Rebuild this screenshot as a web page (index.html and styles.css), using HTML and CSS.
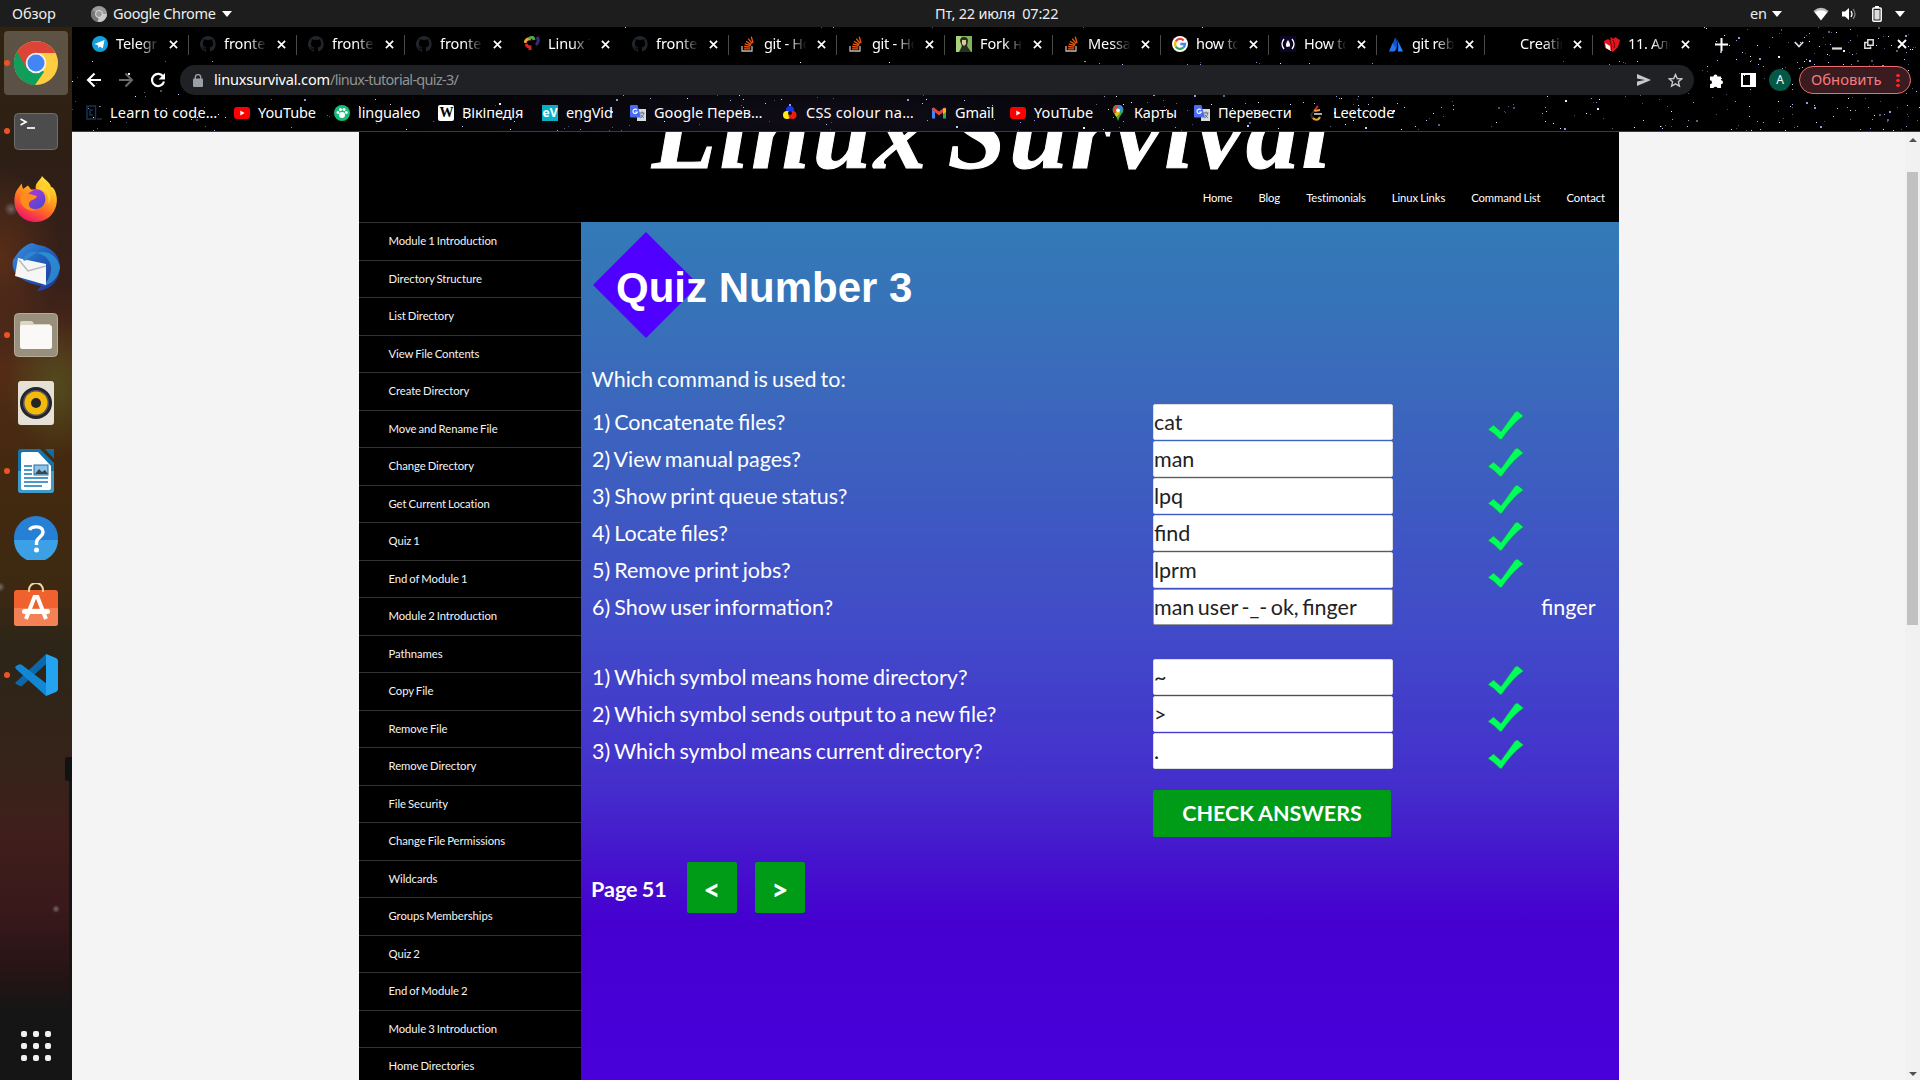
FILE: index.html
```html
<!DOCTYPE html>
<html lang="ru">
<head>
<meta charset="utf-8">
<title>Linux Survival</title>
<link rel="stylesheet" href="styles.css">
</head>
<body>
<svg class="defs" aria-hidden="true">
  <symbol id="x" viewBox="0 0 10 10"><path d="M1 1l8 8M9 1l-8 8" stroke="#fff" stroke-width="1.9" fill="none"/></symbol>
  <symbol id="github" viewBox="0 0 16 16"><path fill="#20262c" d="M8 0a8 8 0 0 0-2.5 15.6c.4.1.5-.2.5-.4v-1.500c-2.200.5-2.700-1-2.700-1-.4-.9-.9-1.200-.9-1.200-.7-.5.1-.5.1-.5.8.1 1.200.8 1.200.8.7 1.300 1.900.9 2.300.7.1-.5.300-.9.5-1.100-1.800-.2-3.600-.9-3.600-4 0-.9.300-1.600.8-2.100-.1-.2-.4-1 .1-2.100 0 0 .7-.2 2.200.8a7.500 7.500 0 0 1 4 0c1.500-1 2.200-.8 2.200-.8.4 1.100.2 1.900.1 2.100.5.6.8 1.300.8 2.100 0 3.100-1.900 3.700-3.700 3.900.3.300.6.8.6 1.500v2.200c0 .2.100.5.600.4A8 8 0 0 0 8 0z"/></symbol>
  <symbol id="so" viewBox="0 0 16 16"><path d="M2 10v5h10v-5" fill="none" stroke="#bcbbbb" stroke-width="1.300"/><path d="M4 12.800h6.200M4.100 10.500l6.200.6M4.700 7.900l6 1.700M6 5.300l5.300 3.300M8.200 2.700l4.100 4.800M11.200.8l1.900 5.900" stroke="#f2590d" stroke-width="1.300"/></symbol>
  <symbol id="yt" viewBox="0 0 16 16"><rect y="2" width="16" height="12" rx="3" fill="#f00"/><path d="M6.300 5.500v5l4.300-2.500z" fill="#fff"/></symbol>
  <symbol id="gtr" viewBox="0 0 16 16"><rect x="7" y="4" width="9" height="12" fill="#d8dce0"/><path d="M9.500 8h5M12 6.500V8M10.500 13c2-1 3-3 3.200-5M10.800 9.500l3 3.500" stroke="#5f7078" fill="none"/><path d="M0 1a1 1 0 0 1 1-1h6.500L11 12.500H1a1 1 0 0 1-1-1z" fill="#4a6cf0"/><path d="M7 5a2.200 2.200 0 1 0 .3 2H5.200" stroke="#fff" stroke-width="1.100" fill="none"/></symbol>
  <symbol id="tick" viewBox="0 0 37 30"><path d="M1 19.500L6.500 15L14 21.500L28 2L30.500 1L36.500 6Q26 13 14.500 29.500H13Q7 23 1 19.500z" fill="#00ff5a" stroke="#1d8a62" stroke-width=".7"/></symbol>
</svg>

<header class="topbar">
  <div class="activities">Обзор</div>
  <div class="app-menu">
    <svg width="16" height="16" viewBox="0 0 16 16"><circle cx="8" cy="8" r="8" fill="#9b9b9b"/><path d="M8 8L1 4.200A8 8 0 0 0 7 16z" fill="#777"/><path d="M8 8h8a8 8 0 0 1-9 8z" fill="#c9c9c9"/><circle cx="8" cy="8" r="3.500" fill="#999" stroke="#e0e0e0"/></svg>
    <span>Google Chrome</span><i class="caret"></i>
  </div>
  <div class="clock">Пт, 22 июля&nbsp; 07:22</div>
  <div class="status">
    <span>en</span><i class="caret"></i>
    <svg class="wifi" width="16" height="14" viewBox="0 0 16 14"><path d="M.5 4Q8-2.500 15.500 4L14 6Q8 1.400 2 6z" fill="#bbb"/><path d="M1.700 5.500Q8 .8 14.300 5.500L8 13.500z" fill="#fff"/></svg>
    <svg class="vol" width="16" height="14" viewBox="0 0 16 14"><path d="M1 4.500h3L8 1v12L4 9.500H1z" fill="#fff"/><path d="M10 4q2 3 0 6" stroke="#fff" fill="none" stroke-width="1.300"/><path d="M12 2q4 5 0 10" stroke="#888" fill="none" stroke-width="1.200"/></svg>
    <svg class="bat" width="10" height="16" viewBox="0 0 10 16"><rect x=".8" y="2" width="8.400" height="13.200" rx="1" stroke="#fff" stroke-width="1.500" fill="none"/><rect x="3" y="0" width="4" height="2" fill="#fff"/><rect x="2.400" y="4" width="5.200" height="9.500" fill="#ddd"/></svg>
    <i class="caret last"></i>
  </div>
</header>

<div class="desktop">
<aside class="dock">
  <div class="app app-chrome running"><svg width="44" height="44" viewBox="0 0 44 44"><circle cx="22" cy="22" r="22" fill="#ffcd40"/><path d="M22 22L3.500 10.500A22 22 0 0 0 21 44l9-13z" fill="#119e5a"/><path d="M3 11A22 22 0 0 1 41.500 12H22L12.500 28z" fill="#dc4437"/><path d="M3 11l9.500 16a10 10 0 0 0 9.500 5l-1 12A22 22 0 0 1 3 11z" fill="#119e5a"/><circle cx="22" cy="22" r="10.300" fill="#f1f1f1"/><circle cx="22" cy="22" r="8.500" fill="#4285f4"/></svg></div>
  <div class="app app-terminal running"><svg width="44" height="37" viewBox="0 0 44 37"><rect x=".5" y=".5" width="43" height="36" rx="4" fill="#4c4c4c" stroke="#6e6e6e"/><path d="M6.500 6l5.500 3-5.500 3" stroke="#fff" stroke-width="1.700" fill="none"/><path d="M13 15h8" stroke="#fff" stroke-width="1.700"/></svg></div>
  <div class="app app-firefox"><svg width="44" height="46" viewBox="0 0 44 46"><defs><linearGradient id="ff" x1=".8" y1="0" x2=".3" y2="1"><stop offset="0" stop-color="#fff036"/><stop offset=".35" stop-color="#ffb020"/><stop offset=".65" stop-color="#ff6a26"/><stop offset="1" stop-color="#ee0f6b"/></linearGradient><linearGradient id="fp" x1="0" y1="0" x2=".6" y2="1"><stop offset="0" stop-color="#b833e1"/><stop offset="1" stop-color="#5248cf"/></linearGradient></defs><path d="M7.500 7.500L9 13l5-3.500 3 4h5C20 7 27 4 28 0c3 4 8 6 9 11 2 0 3 2 4 4 6 14-3 31-19 31S-2 32 1 19c1-5 4-7 6.500-11.500z" fill="url(#ff)"/><path d="M13 30a11 11 0 0 1 5-15c4-3 8-2 11 1 4 5 3 13-3 16-4 2-9 1-13-2z" fill="url(#fp)"/><path d="M6 20c6-4 11-2 17 0-1 4-6 3-8 7-1 3 2 7 8 7-9 3-18-4-17-14z" fill="#ff8c1c"/><path d="M22 13c8-1 15 6 12 15 5-6 2-16-4-19z" fill="#ffcf30"/></svg></div>
  <div class="app app-thunderbird"><svg width="48" height="48" viewBox="0 0 48 48"><defs><linearGradient id="tb" x1="0" y1="0" x2="1" y2="1"><stop offset="0" stop-color="#3e91e2"/><stop offset=".45" stop-color="#1f62bd"/><stop offset="1" stop-color="#282c92"/></linearGradient></defs><path d="M1 17C6 9 12 2 20 0l6 2c12 1 22 10 22 22 0 13-9 23-23 24l4-5C14 40-2 33 1 17z" fill="url(#tb)"/><path d="M24 10c8 1 16 7 15 17-1 7-4 12-8 16 10-2 16-10 17-19-2-9-10-18-24-14z" fill="#2e9bd8" opacity=".75"/><path d="M6 15l28 6v21L3 33z" fill="#f6f6f6"/><path d="M7 17l9 11 18-5" stroke="#b9b9b9" fill="none" stroke-width="1.500"/><path d="M11 17c2-7 8-9 15-8l-8 5c-3 2-4 5-7 3z" fill="#2f86cc"/></svg></div>
  <div class="app app-files running"><svg width="44" height="44" viewBox="0 0 44 44"><rect x=".5" y=".5" width="43" height="43" rx="4" fill="#98907d" stroke="#b4ad9d"/><path d="M6 10q0-2 2-2h9q2 0 3 3h16v8H6z" fill="#dcd6c9"/><rect x="6" y="12" width="32" height="24" rx="2.500" fill="#faf9f7"/></svg></div>
  <div class="app app-rhythm"><svg width="36" height="44" viewBox="0 0 36 44"><rect width="36" height="44" rx="3" fill="#e5e1d6"/><circle cx="18" cy="22" r="16" fill="#24242b"/><circle cx="18" cy="22" r="13" fill="#565663"/><circle cx="18" cy="22" r="11.500" fill="#f3b90c"/><circle cx="18" cy="22" r="5" fill="#242424"/></svg></div>
  <div class="app app-writer running"><svg width="36" height="44" viewBox="0 0 36 44"><path d="M3 0h19l14 14v27a3 3 0 0 1-3 3H3a3 3 0 0 1-3-3V3a3 3 0 0 1 3-3z" fill="#1574ab"/><path d="M0 22h36v19a3 3 0 0 1-3 3H3a3 3 0 0 1-3-3z" fill="#419bc9"/><path d="M27 0h9v10z" fill="#156b9d"/><path d="M5 3h15l13 14v22a2 2 0 0 1-2 2H5a2 2 0 0 1-2-2V5a2 2 0 0 1 2-2z" fill="#fff"/><path d="M6 17h8M6 21h8M6 25h8M6 29h24M6 33h24M6 37h18" stroke="#1678b5" stroke-width="1.700"/><rect x="16" y="16" width="14" height="10" fill="#8ac4e8" stroke="#276e9c"/><path d="M17 25l4-5 3 3 3-2 3 4z" fill="#444"/></svg></div>
  <div class="app app-help"><svg width="44" height="44" viewBox="0 0 44 44"><circle cx="22" cy="22" r="22" fill="#2580d6"/><path d="M0 24h44a22 22 0 0 1-44 0z" fill="#3ba0e6"/><path d="M15.500 14c2-4 13-5 13.500 2 0 5-6 5-6.500 10v3" stroke="#fff" stroke-width="3.400" fill="none"/><circle cx="22.500" cy="34" r="2.500" fill="#fff"/></svg></div>
  <div class="app app-store"><svg width="44" height="43" viewBox="0 0 44 43"><rect y="7" width="44" height="36" rx="3" fill="#f0622d"/><path d="M0 25h44v15a3 3 0 0 1-3 3H3a3 3 0 0 1-3-3z" fill="#f48055"/><path d="M15 9V7a7 7 0 0 1 14 0v2" fill="none" stroke="#ecd7a0" stroke-width="2"/><path d="M12 36L20.500 14h3L32 36" stroke="#fff" stroke-width="4" fill="none"/><rect x="8" y="26" width="28" height="5" rx="2.500" fill="#fff"/></svg></div>
  <div class="app app-code running"><svg width="43" height="42" viewBox="0 0 43 42"><path d="M0 29l31-29v10L7 32q-3 1-7-3z" fill="#0c67ab"/><path d="M0 13q4-4 7-2l25 19-1 12L1 15z" fill="#1287d3"/><path d="M31 0l10 4q2 1 2 3v28q0 2-2 3l-10 4z" fill="#24a4f0"/></svg></div>
  <div class="edge-mark"></div>
  <div class="apps-grid"><i></i><i></i><i></i><i></i><i></i><i></i><i></i><i></i><i></i></div>
</aside>

<section class="browser">
  <div class="chrome">
    <svg class="stars" id="stars" width="1848" height="104"></svg>
    <div class="tabs">
      <div class="tab"><svg class="fav" viewBox="0 0 16 16"><circle cx="8" cy="8" r="8" fill="#139fda"/><path d="M2.500 8l10-4-1.700 8.500-2.900-2-1.500 1.500-.4-2.800z" fill="#fff"/></svg><span>Telegram</span><svg class="cl"><use href="#x"/></svg></div>
      <div class="tab"><svg class="fav"><use href="#github"/></svg><span>frontend</span><svg class="cl"><use href="#x"/></svg></div>
      <div class="tab"><svg class="fav"><use href="#github"/></svg><span>frontend</span><svg class="cl"><use href="#x"/></svg></div>
      <div class="tab nosep"><svg class="fav"><use href="#github"/></svg><span>frontend</span><svg class="cl"><use href="#x"/></svg></div>
      <div class="tab nosep"><svg class="fav" viewBox="0 0 16 16" fill="none" stroke-width="3"><path d="M1 7q1-5 6-4" stroke="#e8a532"/><path d="M5 3q4-4 5 1" stroke="#57a843"/><path d="M2 8q1 3 4 3v3" stroke="#d8252c"/><path d="M13 1q3 4-1 8" stroke="#3a2d78"/></svg><span>Linux T</span><svg class="cl"><use href="#x"/></svg></div>
      <div class="tab"><svg class="fav"><use href="#github"/></svg><span>frontend</span><svg class="cl"><use href="#x"/></svg></div>
      <div class="tab"><svg class="fav"><use href="#so"/></svg><span class="tight">git - How</span><svg class="cl"><use href="#x"/></svg></div>
      <div class="tab"><svg class="fav"><use href="#so"/></svg><span class="tight">git - How</span><svg class="cl"><use href="#x"/></svg></div>
      <div class="tab"><svg class="fav" viewBox="0 0 16 16"><rect width="16" height="16" fill="#7fb35c"/><path d="M0 0h5v16H0z" fill="#a9d179"/><path d="M4 5q0-4 4-4t4 4l-1 5 4 6H3l3-6z" fill="#26321f"/><path d="M6 4h4v4l-2 2-2-2z" fill="#e5c3a0"/></svg><span>Fork на</span><svg class="cl"><use href="#x"/></svg></div>
      <div class="tab"><svg class="fav"><use href="#so"/></svg><span>Message</span><svg class="cl"><use href="#x"/></svg></div>
      <div class="tab"><svg class="fav" viewBox="0 0 16 16"><circle cx="8" cy="8" r="8" fill="#fff"/><g fill="none" stroke-width="2.300"><path d="M11.700 4.500A5 5 0 0 0 3.800 5.300" stroke="#ea4335"/><path d="M3.800 5.300a5 5 0 0 0 0 5.300" stroke="#fbbc05"/><path d="M3.800 10.600a5 5 0 0 0 7.400 1.100" stroke="#34a853"/><path d="M11.200 11.700A5 5 0 0 0 13 8H8.300" stroke="#4285f4"/></g></svg><span class="tight">how to c</span><svg class="cl"><use href="#x"/></svg></div>
      <div class="tab"><svg class="fav" viewBox="0 0 16 16"><rect width="16" height="16" fill="#0d0524"/><path d="M4 3Q0 8 4 13M12 3q4 5 0 10" stroke="#fff" fill="none" stroke-width="1.300"/><path d="M8 4q-3 4-1.500 7 3-1 3 0Q11 8 8 4z" fill="#fff"/></svg><span class="tight">How to c</span><svg class="cl"><use href="#x"/></svg></div>
      <div class="tab"><svg class="fav" viewBox="0 0 16 16"><path d="M7 1.500q4 5 1 13L2 15z" fill="#1450c8"/><path d="M8 1l7 14.500h-5Q11 7 8 1z" fill="#2684ff"/><path d="M4.500 7L8 12l-1.500 3.500H1z" fill="#2a73ee"/></svg><span class="tight">git reba</span><svg class="cl"><use href="#x"/></svg></div>
      <div class="tab"><i class="fav"></i><span>Creating</span><svg class="cl"><use href="#x"/></svg></div>
      <div class="tab nosep"><svg class="fav" viewBox="0 0 16 16"><path d="M0 5l4-2 3 2-1-4 4 2 1-2 5 3-2 7-5 5-8-4z" fill="#e3141c"/><path d="M1 7l5 3 1 5-5-3z" fill="#fff"/><path d="M6 5q3 5 1 9M9 4q3 5 1 8" stroke="#6d0508" fill="none"/></svg><span class="tight">11. Алго</span><svg class="cl"><use href="#x"/></svg></div>
      <svg class="newtab" width="13" height="13" viewBox="0 0 13 13"><path d="M6.500 0v13M0 6.500h13" stroke="#fff" stroke-width="2"/></svg>
      <div class="winctl">
        <svg width="10" height="7" viewBox="0 0 10 7"><path d="M.8 1l4.200 4.500L9.200 1" stroke="#ddd" stroke-width="1.800" fill="none"/></svg>
        <svg class="wmin" width="10" height="12" viewBox="0 0 10 12"><path d="M0 10.500h10" stroke="#ddd" stroke-width="2.200"/></svg>
        <svg class="wmax" width="10" height="10" viewBox="0 0 10 10"><path d="M3.800.8h5.400v5.400H3.800z M3 3.500H.8v5.700h5.700V7.500" stroke="#ddd" stroke-width="1.500" fill="none"/></svg>
        <svg class="wcl" width="10" height="10"><use href="#x"/></svg>
      </div>
    </div>

    <div class="toolbar">
      <svg width="16" height="16" viewBox="0 0 16 16"><path d="M15 8H2M8.500 1.500L2 8l6.500 6.500" stroke="#fff" stroke-width="2.100" fill="none"/></svg>
      <svg width="16" height="16" viewBox="0 0 16 16"><path d="M1 8h13M7.500 1.500L14 8l-6.500 6.500" stroke="#696969" stroke-width="2.100" fill="none"/></svg>
      <svg width="16" height="16" viewBox="0 0 16 16"><path d="M13.300 4.800A6.100 6.100 0 1 0 14 9.500" stroke="#fff" stroke-width="2.200" fill="none"/><path d="M15 1v6.500H8.500z" fill="#fff"/></svg>
      <div class="omnibox">
        <svg width="10" height="13" viewBox="0 0 10 13"><rect y="4.500" width="10" height="8.500" rx="1" fill="#9aa0a6"/><path d="M2.300 5V3.300a2.700 2.700 0 0 1 5.400 0V5" stroke="#9aa0a6" stroke-width="1.400" fill="none"/></svg>
        <p class="url"><b>linuxsurvival.com</b>/linux-tutorial-quiz-3/</p>
        <svg width="14" height="12" viewBox="0 0 14 12"><path d="M0 0l14 6-14 6V7.500L8 6 0 4.500z" fill="#c8c8c8"/></svg>
        <svg class="star" width="15" height="15" viewBox="0 0 15 15"><path d="M7.500 1.500l1.800 4 4.400.4-3.300 2.900 1 4.300-3.900-2.300-3.900 2.300 1-4.300L1.300 5.900l4.400-.4z" fill="none" stroke="#c8c8c8" stroke-width="1.400"/></svg>
      </div>
      <svg class="puzzle" width="15" height="15" viewBox="0 0 15 15"><path d="M1 3.500h3.500a2 2 0 1 1 4 0H12v3.700a2 2 0 1 1 0 4V15H8.500a2.200 2.200 0 0 0-4 0H1v-3.800a2 2 0 0 0 0-4z" fill="#fff"/></svg>
      <svg class="panel" width="15" height="14" viewBox="0 0 15 14"><rect x="1" y="1" width="13" height="12" fill="none" stroke="#fff" stroke-width="2"/><rect x="9" y="1" width="5" height="12" fill="#fff"/></svg>
      <div class="avatar">A</div>
      <div class="update"><span>Обновить</span><i></i></div>
    </div>

    <div class="bookmarks">
      <div class="bm"><svg viewBox="0 0 16 16"><rect x="1" y="1" width="8.500" height="13" fill="none" stroke="#173549" stroke-width="1.500"/><path d="M7 5H4v5h3M11 14h5" stroke="#173549" stroke-width="1.500" fill="none"/></svg><span>Learn to code…</span></div>
      <div class="bm"><svg><use href="#yt"/></svg><span>YouTube</span></div>
      <div class="bm"><svg viewBox="0 0 16 16"><circle cx="8" cy="8" r="8" fill="#15bf78"/><g fill="#fff"><circle cx="8" cy="10" r="3"/><circle cx="4" cy="7.500" r="1.400"/><circle cx="6.500" cy="4.500" r="1.500"/><circle cx="10" cy="4.500" r="1.500"/><circle cx="12.300" cy="7.500" r="1.400"/></g></svg><span>lingualeo</span></div>
      <div class="bm"><b class="wiki">W</b><span>Вікіпедія</span></div>
      <div class="bm"><b class="ev">eV</b><span>engVid</span></div>
      <div class="bm"><svg><use href="#gtr"/></svg><span>Google Перев…</span></div>
      <div class="bm"><svg viewBox="0 0 16 16"><circle cx="8" cy="5" r="4" fill="#1536ef"/><circle cx="5" cy="10" r="4" fill="#ffef10"/><circle cx="10.500" cy="10" r="4" fill="#ef1a12"/><circle cx="8" cy="8" r="2" fill="#111"/></svg><span>CSS colour na…</span></div>
      <div class="bm"><svg viewBox="0 0 16 16"><path d="M2.500 13.500V3" stroke="#4285f4" stroke-width="3"/><path d="M13.500 13.500V3" stroke="#34a853" stroke-width="3"/><path d="M1.500 3.300L8 8.500l6.500-5.200" stroke="#ea4335" stroke-width="3" fill="none"/><path d="M12 3.500h3V7l-3 2z" fill="#fbbc04"/></svg><span>Gmail</span></div>
      <div class="bm"><svg><use href="#yt"/></svg><span>YouTube</span></div>
      <div class="bm"><svg viewBox="0 0 16 16"><path d="M8 16q-1-4-3.500-7a5.400 5.400 0 1 1 7.500-.5Q9 12 8 16z" fill="#34a853"/><path d="M3 5a5.400 5.400 0 0 1 6-4.800L4.500 8z" fill="#ea4335"/><path d="M8 0a5.400 5.400 0 0 1 5 3.500L9 7z" fill="#4285f4"/><path d="M4.500 9L9 5l1 3-3.500 4z" fill="#fbbc04"/><circle cx="8" cy="5.300" r="1.900" fill="#fff"/></svg><span>Карты</span></div>
      <div class="bm"><svg><use href="#gtr"/></svg><span>Перевести</span></div>
      <div class="bm"><svg viewBox="0 0 16 16" fill="none" stroke-width="2"><path d="M9 1L5 6" stroke="#d92b45"/><path d="M5 6l6-1" stroke="#e8a33a"/><path d="M5 9h8" stroke="#aaa"/><path d="M11 12q-2 4-6 2l-2-2" stroke="#f0a52c"/><path d="M5 6l-3 4 2 3" stroke="#332c25"/></svg><span>Leetcode</span></div>
    </div>
  </div>

  <div class="viewport">
    <div class="site">
      <header class="site-head">
        <div class="logo">Linux Survival</div>
        <nav class="topnav"><a>Home</a><a>Blog</a><a>Testimonials</a><a>Linux Links</a><a>Command List</a><a>Contact</a></nav>
      </header>
      <div class="site-body">
        <nav class="side">
          <a>Module 1 Introduction</a><a>Directory Structure</a><a>List Directory</a><a>View File Contents</a><a>Create Directory</a><a>Move and Rename File</a><a>Change Directory</a><a>Get Current Location</a><a>Quiz 1</a><a>End of Module 1</a><a>Module 2 Introduction</a><a>Pathnames</a><a>Copy File</a><a>Remove File</a><a>Remove Directory</a><a>File Security</a><a>Change File Permissions</a><a>Wildcards</a><a>Groups Memberships</a><a>Quiz 2</a><a>End of Module 2</a><a>Module 3 Introduction</a><a>Home Directories</a>
        </nav>
        <main class="quiz">
          <h1>Quiz Number 3</h1>
          <p class="lead">Which command is used to:</p>
          <div class="rows">
            <div class="row"><label>1) Concatenate files?</label><div class="field">cat</div><svg class="tick"><use href="#tick"/></svg></div>
            <div class="row"><label>2) View manual pages?</label><div class="field">man</div><svg class="tick"><use href="#tick"/></svg></div>
            <div class="row"><label>3) Show print queue status?</label><div class="field">lpq</div><svg class="tick"><use href="#tick"/></svg></div>
            <div class="row"><label>4) Locate files?</label><div class="field">find</div><svg class="tick"><use href="#tick"/></svg></div>
            <div class="row"><label>5) Remove print jobs?</label><div class="field">lprm</div><svg class="tick"><use href="#tick"/></svg></div>
            <div class="row"><label>6) Show user information?</label><div class="field wrong">man user -_- ok, finger</div><span class="answer">finger</span></div>
          </div>
          <div class="rows second">
            <div class="row"><label>1) Which symbol means home directory?</label><div class="field">~</div><svg class="tick"><use href="#tick"/></svg></div>
            <div class="row"><label>2) Which symbol sends output to a new file?</label><div class="field">&gt;</div><svg class="tick"><use href="#tick"/></svg></div>
            <div class="row"><label>3) Which symbol means current directory?</label><div class="field">.</div><svg class="tick"><use href="#tick"/></svg></div>
          </div>
          <div class="check">CHECK ANSWERS</div>
          <div class="pager"><b>Page 51</b><span>&lt;</span><span>&gt;</span></div>
        </main>
      </div>
    </div>
    <div class="scrollbar"><i class="up"></i><i class="thumb"></i><i class="down"></i></div>
  </div>
</section>
</div>
<script src="stars.js"></script>
</body>
</html>
```
FILE: styles.css
```css
* { box-sizing: border-box; }
body { margin: 0; width: 1920px; height: 1080px; overflow: hidden; background: #000; color: #fff; font: 15px/18px "Noto Sans", "Open Sans", sans-serif; display: flex; flex-direction: column; }
.defs { display: none; }
svg { display: block; flex: none; }
p { margin: 0; }

/* system bar */
.topbar { height: 27px; flex: none; background: #1d1d1d; display: grid; grid-template-columns: 91px 844px 1fr auto; align-items: center; color: #eee; font-size: 14.5px; letter-spacing: -.1px; }
.activities { padding: 0 0 2px 12px; }
.app-menu { display: flex; align-items: center; gap: 6px; }
.app-menu span, .status span { padding-bottom: 2px; }
.app-menu span { letter-spacing: -.35px; }
.caret { border: 5px solid transparent; border-top: 6px solid #fff; border-bottom: 0; width: 0; }
.clock { padding-bottom: 2px; white-space: nowrap; letter-spacing: -.2px; }
.status { display: flex; align-items: center; justify-content: flex-end; padding-right: 15px; }
.status span { margin-right: 5px; }
.wifi { margin-left: 31px; }
.vol { margin-left: 12px; }
.bat { margin-left: 15px; }
.last { margin-left: 13px; }

.desktop { display: flex; flex: 1; min-height: 0; }

/* dock */
.dock { width: 72px; flex: none; position: relative; display: flex; flex-direction: column; align-items: center; padding-top: 4px;
  background: radial-gradient(circle at 11px 182px, #6d6460 0, #6d646000 7px), radial-gradient(circle at 56px 117px, #777 0, #7770 1.500px), radial-gradient(circle at 0 560px, #77716b 0, #7770 5px), radial-gradient(circle at 56px 882px, #7a6a6a 0, #7770 4px),
  radial-gradient(ellipse 50px 70px at 56px 360px, #515b22aa, #0000), radial-gradient(ellipse 60px 90px at 0 230px, #6b3517aa, #0000),
  linear-gradient(#30230f 0, #2e1f16 130px, #38201a 260px, #542c16 340px, #44290f 430px, #3d2912 560px, #2c2518 620px, #36231a 740px, #3f1f1b 800px, #3a191b 880px, #281416 940px, #151515 985px, #151515); }
.app { position: relative; display: flex; align-items: center; justify-content: center; width: 64px; height: 64px; flex: none; margin-bottom: 4px; }
.app-chrome { background: #ffffff38; border-radius: 4px; }
.app-help { padding-bottom: 2px; }
.app-store { padding-bottom: 6px; }
.running::before { content: ""; position: absolute; left: 0; top: 29px; width: 6px; height: 6px; border-radius: 3px; background: #ec5425; }
.apps-grid { margin-top: auto; margin-bottom: 19px; display: grid; grid-template-columns: repeat(3, 6px); gap: 6px; }
.apps-grid i { width: 6px; height: 6px; border-radius: 2px; background: #f2f2f2; }
.edge-mark { position: absolute; right: 0; top: 730px; width: 3px; height: 256px; background: #151515; }
.edge-mark::before { content: ""; position: absolute; right: 0; top: 0; width: 7px; height: 24px; background: #121212; border-radius: 3px 0 0 3px; }

/* browser frame */
.browser { width: 1848px; display: flex; flex-direction: column; }
.chrome { position: relative; height: 105px; border-bottom: 1px solid #3c3c3c; background: radial-gradient(ellipse 500px 60px at 750px 90px, #100d18, #000); display: flex; flex-direction: column; }
.stars { position: absolute; left: 0; top: 0; }
.tabs { position: relative; height: 34px; display: flex; align-items: center; padding-left: 9px; }
.tab { position: relative; width: 108px; flex: none; height: 33px; display: flex; align-items: center; padding-left: 11px; background: #000; }
.tab::after { content: ""; position: absolute; right: 0; top: 7px; width: 1px; height: 20px; background: #4a4a4a; }
.nosep::after { display: none; }
.fav { width: 16px; height: 16px; flex: none; }
.tab span { margin-left: 8px; padding-bottom: 2px; width: 44px; overflow: hidden; white-space: nowrap; letter-spacing: -.1px; font-size: 14.500px; -webkit-mask: linear-gradient(90deg, #000 55%, transparent 97%); mask: linear-gradient(90deg, #000 55%, transparent 97%); }
.tab .tight { letter-spacing: -.3px; }
.cl { width: 9px; height: 9px; margin-left: 9px; }
.newtab { margin-left: 14px; }
.winctl { margin-left: auto; margin-right: 13px; display: flex; align-items: center; }
.wmin { margin-left: 28px; }
.wmax { margin-left: 22px; }
.wcl { margin-left: 23px; }
.toolbar { position: relative; height: 38px; display: flex; align-items: center; padding-left: 14px; gap: 16px; }
.omnibox { width: 1514px; height: 30px; margin-left: -2px; border-radius: 15px; background: #202124; display: flex; align-items: center; padding: 0 11px 0 13px; }
.url { flex: 1; margin-left: 11px; padding-bottom: 2px; color: #909396; font-size: 14.500px; letter-spacing: -.7px; }
.url b { font-weight: 400; color: #fff; letter-spacing: -.15px; }
.star { margin-left: 17px; }
.puzzle { margin-left: -1px; }
.panel { margin-left: 1px; }
.avatar { width: 22px; height: 22px; margin-left: -3px; border-radius: 50%; background: #045846; font: 12px/22px "Noto Sans", sans-serif; text-align: center; }
.update { width: 112px; height: 28px; margin-left: -8px; border: 1px solid #ec6a6e; border-radius: 14px; background: #3a1c20; color: #f8797f; display: flex; align-items: center; padding-left: 11px; font-size: 14.800px; }
.update span { padding-bottom: 2px; }
.update i { width: 4px; height: 15px; margin-left: 15px; background: radial-gradient(circle, #f22 1.600px, transparent 1.900px) 0 0 / 4px 5px; }
.bookmarks { position: relative; height: 32px; padding-left: 14px; display: flex; align-items: center; margin-top: -2px; }
.bm { display: flex; align-items: center; gap: 8px; width: 104px; flex: none; white-space: nowrap; font-size: 14.500px; letter-spacing: -.1px; }
.bm span { padding-bottom: 2px; }
.bm svg, .bm b { width: 16px; height: 16px; flex: none; }
.bm:nth-child(1) { width: 148px; letter-spacing: .2px; }
.bm:nth-child(2) { width: 100px; }
.bm:nth-child(5) { width: 88px; }
.bm:nth-child(6) { width: 152px; letter-spacing: .05px; }
.bm:nth-child(7) { width: 149px; letter-spacing: .25px; }
.bm:nth-child(8) { width: 79px; }
.bm:nth-child(9) { width: 100px; letter-spacing: .1px; }
.bm:nth-child(10) { width: 84px; }
.bm:nth-child(11) { width: 115px; }
.wiki { background: #fff; color: #000; border-radius: 2px; font: bold 14px/16px "Liberation Serif", serif; text-align: center; letter-spacing: -1px; }
.ev { background: #08afc7; color: #fff; font: bold 12px/16px "Noto Sans", sans-serif; text-align: center; }

/* page */
.viewport { flex: 1; min-height: 0; display: flex; justify-content: space-between; background: #f4f4f4; font-family: Lato, sans-serif; }
.site { width: 1260px; margin-left: 287px; height: 948px; overflow: hidden; }
.site-head { height: 90px; background: #000; display: flex; flex-direction: column; justify-content: space-between; overflow: hidden; }
.logo { margin: -47px 0 0 293px; height: 96px; font: italic bold 105px/96px "Liberation Serif", serif; white-space: nowrap; letter-spacing: 3px; word-spacing: -11px; -webkit-text-stroke: 1px #fff; }
.topnav { display: flex; justify-content: flex-end; gap: 26px; padding-right: 14px; font-size: 11.300px; letter-spacing: -.1px; word-spacing: -.5px; line-height: 16px; margin-bottom: 16px; }
.site-body { display: grid; grid-template-columns: 222px 1038px; height: 858px; }
.side { background: #000; font-size: 11.300px; letter-spacing: -.06px; word-spacing: -.8px; color: #f4f4f4; overflow: hidden; }
.side a { display: block; height: 37.500px; padding: 9px 0 0 29.500px; line-height: 17px; border-top: 1px solid #333; }
.quiz { padding-left: 11px; font-size: 21.500px; word-spacing: -1.500px; line-height: 37px; background: linear-gradient(#337ab7 0, #3673b8 80px, #3b67bc 180px, #4149c9 420px, #442fcc 560px, #4513cd 640px, #4500d0 700px, #4900db 858px); overflow: hidden; }
.quiz h1 { position: relative; z-index: 0; margin: 10px 0 0 1px; padding: 32px 0 0 23px; height: 106px; font: bold 42px/48px "Liberation Sans", Arial, sans-serif; word-spacing: 0; }
.quiz h1::before { content: ""; position: absolute; z-index: -1; left: 0; top: 0; width: 106px; height: 106px; background: #4f00ff; clip-path: polygon(50% 0, 100% 50%, 50% 100%, 0 50%); }
.lead { margin: 23px 0 0 -.5px; }
.rows { margin-top: 6px; }
.second { margin-top: 33px; }
.row { display: grid; grid-template-columns: 561px 334px 1fr; height: 37px; align-items: start; line-height: 37px; }
.field { width: 240px; height: 36px; border: 1px solid #dedede; border-radius: 2px; background: #fff; color: #222; line-height: 35px; }
.wrong { border-color: #999; word-spacing: -2px; }
.tick { width: 37px; height: 30px; margin: 6px 0 0 -.5px; }
.answer { padding-left: 54px; }
.check { width: 238px; height: 47px; margin: 20px 0 0 561px; background: #009b17; border-radius: 2px; text-align: center; font-weight: bold; line-height: 47px; word-spacing: -.5px; }
.pager { display: flex; align-items: center; margin: 25px 0 0 -1px; height: 51px; }
.pager b { width: 96px; padding-top: 4px; word-spacing: -1px; }
.pager span { width: 50px; height: 51px; margin-right: 18px; background: #009b17; border-radius: 2px; text-align: center; font-weight: 900; font-size: 29px; line-height: 53px; }
.scrollbar { width: 15px; background: #f1f1f1; display: flex; flex-direction: column; align-items: center; padding: 6px 0 4px; }
.up, .down { border: 4px solid transparent; width: 0; }
.up { border-bottom: 4px solid #505050; border-top: 0; }
.down { border-top: 4px solid #505050; border-bottom: 0; margin-top: auto; }
.thumb { width: 11px; height: 453px; margin-top: 30px; background: #c1c1c1; }
```
FILE: stars.js
```js
// Scatter theme stars over the browser frame, denser toward the right edge.
(function () {
  var seed = 7;
  function rnd() { seed = (seed * 16807) % 2147483647; return seed / 2147483647; }
  var colors = ['#c0caff', '#5a5f88', '#eef2ff', '#4a4f78', '#8f9cd8'];
  var out = '';
  for (var i = 0; i < 2200; i++) {
    var x = Math.floor(rnd() * 1848), y = Math.floor(rnd() * 104);
    if (rnd() > 0.25 + 0.6 * Math.pow(x / 1848, 3)) continue;
    var s = rnd() > 0.88 ? 2 : 1;
    out += '<rect x="' + x + '" y="' + y + '" width="' + s + '" height="' + s + '" fill="' + colors[i % 5] + '"/>';
  }
  document.getElementById('stars').innerHTML = out;
})();
```
